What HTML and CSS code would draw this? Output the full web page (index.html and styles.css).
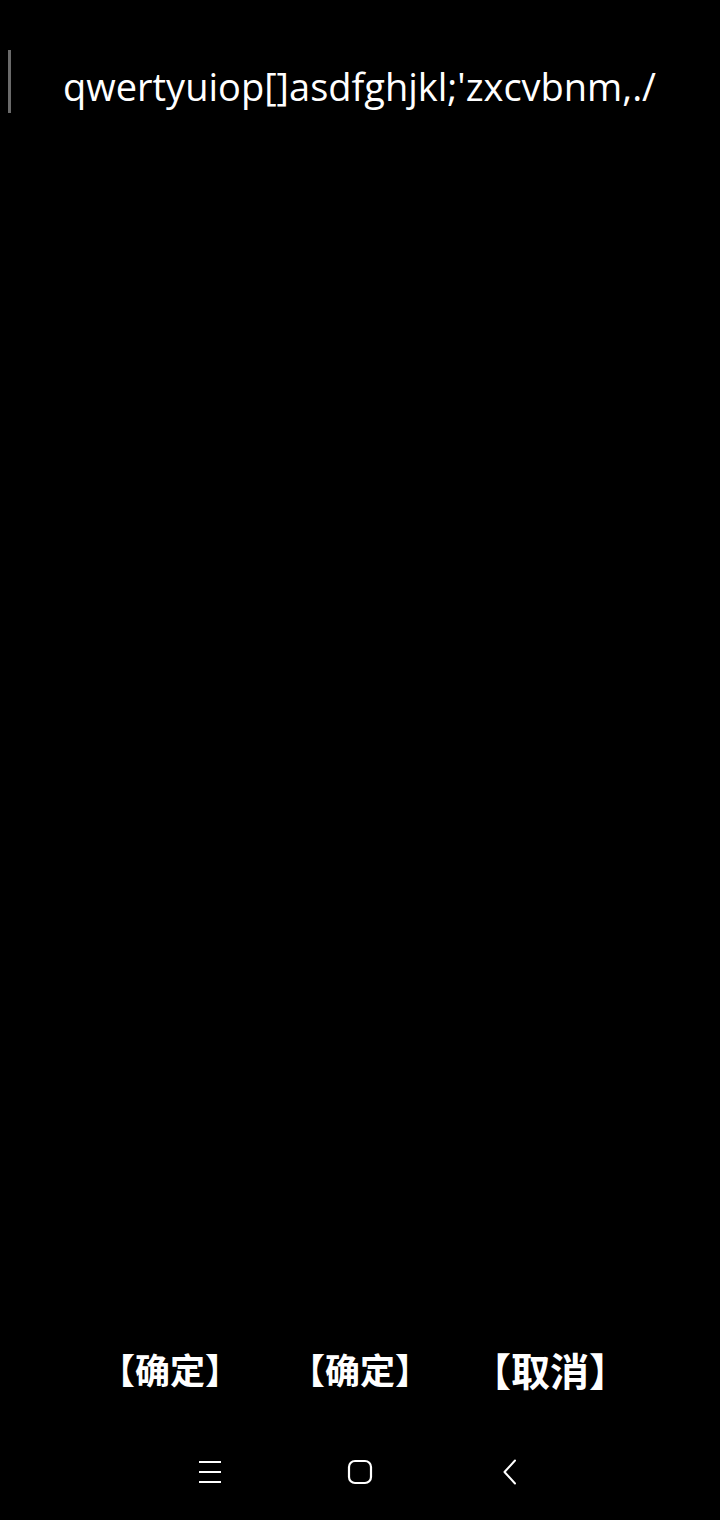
FILE: index.html
```html
<!DOCTYPE html>
<html lang="zh-CN">
<head>
<meta charset="utf-8">
<title>Input</title>
<link rel="stylesheet" href="styles.css">
</head>
<body>
<div class="screen">
  <div class="input-row">
    <div class="caret-bar"></div>
    <div class="input-text">qwertyuiop[]asdfghjkl;'zxcvbnm,./</div>
  </div>
  <div class="spacer"></div>
  <div class="actions">
    <div class="action"><span class="label">【确定】</span></div>
    <div class="action"><span class="label">【确定】</span></div>
    <div class="action"><span class="label big">【取消】</span></div>
  </div>
  <div class="navbar">
    <div class="nav-item">
      <svg width="24" height="24" viewBox="0 0 24 24"><path d="M1 2H23M1 12H23M1 22H23" stroke="#fff" stroke-width="2" fill="none"/></svg>
    </div>
    <div class="nav-item">
      <svg width="26" height="26" viewBox="0 0 26 26"><rect x="2" y="2" width="22" height="22" rx="6" ry="6" stroke="#fff" stroke-width="2.2" fill="none"/></svg>
    </div>
    <div class="nav-item">
      <svg width="16" height="26" viewBox="0 0 16 26"><path d="M13 1.5L2.5 13L13 24.5" stroke="#fff" stroke-width="2" fill="none" stroke-linecap="round" stroke-linejoin="round"/></svg>
    </div>
  </div>
</div>
</body>
</html>
```

FILE: styles.css
```css
html, body {
  margin: 0;
  padding: 0;
  background: #000;
}
.screen {
  width: 720px;
  height: 1520px;
  background: #000;
  color: #fff;
  display: flex;
  flex-direction: column;
  overflow: hidden;
}
.input-row {
  display: flex;
  align-items: center;
  margin-top: 50px;
  height: 63px;
  padding-left: 8px;
}
.caret-bar {
  width: 3px;
  height: 63px;
  background: #6a6a6a;
}
.input-text {
  margin-left: 52px;
  padding-top: 10px;
  font-family: "Open Sans", "Noto Sans", sans-serif;
  font-weight: 500;
  font-size: 38px;
  line-height: 63px;
  white-space: nowrap;
  letter-spacing: 0;
}
.spacer {
  flex: 1;
}
.actions {
  display: flex;
  padding: 0 75px;
  height: 40px;
  margin-bottom: 55px;
}
.action {
  flex: 1;
  display: flex;
  justify-content: center;
  align-items: center;
}
.label {
  font-family: "Noto Sans CJK SC", sans-serif;
  font-weight: 700;
  font-size: 35px;
  line-height: 40px;
  font-feature-settings: "halt";
  white-space: nowrap;
}
.label.big {
  font-size: 39px;
}
.navbar {
  display: flex;
  justify-content: center;
  height: 56px;
  margin-bottom: 20px;
}
.nav-item {
  width: 150px;
  display: flex;
  justify-content: center;
  align-items: center;
}
```
